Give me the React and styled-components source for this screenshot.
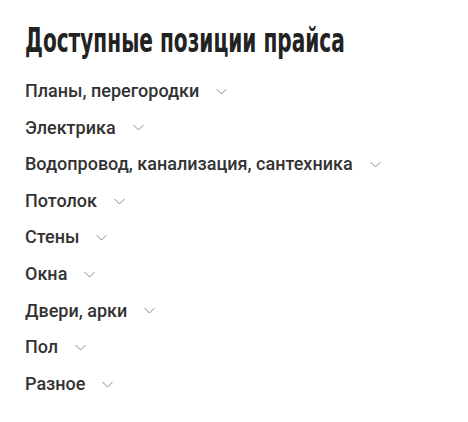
import React from "react";
import styled, { createGlobalStyle } from "styled-components";

const GlobalStyle = createGlobalStyle`
  body {
    margin: 0;
    background: #ffffff;
    font-family: Roboto, "Liberation Sans", sans-serif;
  }
`;

const Section = styled.section`
  padding: 20px 25px 20px;
`;

const Title = styled.h2`
  margin: 0 0 20px;
  font-family: "DejaVu Sans", sans-serif;
  font-stretch: condensed;
  font-weight: 700;
  font-size: 34px;
  line-height: 40px;
  color: #222222;
  transform: scaleX(0.657);
  transform-origin: left center;
  white-space: nowrap;
`;

const List = styled.ul`
  list-style: none;
  margin: 0;
  padding: 0;
  display: flex;
  flex-direction: column;
  gap: 14px;
`;

const Item = styled.li`
  display: flex;
  align-items: center;
  gap: 17px;
  font-size: 18px;
  font-weight: 500;
  line-height: 22.6px;
  color: #333333;
  cursor: pointer;
`;

const Chevron = () => (
  <svg width="11" height="7" viewBox="0 0 11 7" fill="none">
    <path d="M0.5 1 L5.5 6 L10.5 1" stroke="#8a8a8a" strokeWidth="1" />
  </svg>
);

const items = [
  "Планы, перегородки",
  "Электрика",
  "Водопровод, канализация, сантехника",
  "Потолок",
  "Стены",
  "Окна",
  "Двери, арки",
  "Пол",
  "Разное",
];

export default function App() {
  return (
    <>
      <GlobalStyle />
      <Section>
        <Title>Доступные позиции прайса</Title>
        <List>
          {items.map((name) => (
            <Item key={name}>
              {name}
              <Chevron />
            </Item>
          ))}
        </List>
      </Section>
    </>
  );
}
